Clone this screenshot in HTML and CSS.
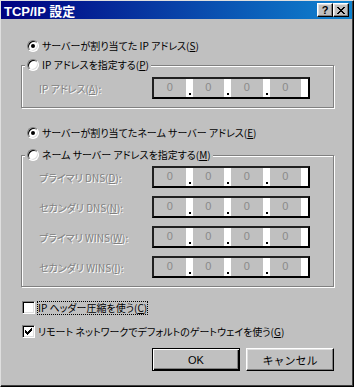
FILE: index.html
```html
<!DOCTYPE html>
<html lang="ja">
<head>
    <meta charset="UTF-8">
    <title>TCP/IP 設定</title>
    <link rel="stylesheet" href="styles.css">
</head>
<body>
    <div class="window">
        <div class="titlebar">
            <span class="title">TCP/IP 設定</span>
            <div class="title-buttons">
                <span class="tbtn help">?</span>
                <span class="tbtn close">
                    <svg width="8" height="7" viewBox="0 0 8 7" shape-rendering="crispEdges"><path d="M0 0h2v1H0z M6 0h2v1H6z M1 1h2v1H1z M5 1h2v1H5z M2 2h4v1H2z M3 3h2v1H3z M2 4h4v1H2z M1 5h2v1H1z M5 5h2v1H5z M0 6h2v1H0z M6 6h2v1H6z" fill="#000"/></svg>
                </span>
            </div>
        </div>

        <div class="content">
            <label class="option ip-auto">
                <span class="radio checked"></span>
                <span class="text">サーバーが割り当てた IP アドレス(<u>S</u>)</span>
            </label>

            <div class="group group-ip">
                <div class="legend option">
                    <span class="radio"></span>
                    <span class="text">IP アドレスを指定する(<u>P</u>)</span>
                </div>
                <div class="field-row">
                    <span class="field-label">IP アドレス(<u>A</u>):</span>
                    <div class="ipbox">
                        <span class="octet"><span class="num">0</span><span class="sep dot"></span></span>
                        <span class="octet"><span class="num">0</span><span class="sep dot"></span></span>
                        <span class="octet"><span class="num">0</span><span class="sep dot"></span></span>
                        <span class="octet"><span class="num">0</span><span class="sep"></span></span>
                    </div>
                </div>
            </div>

            <label class="option dns-auto">
                <span class="radio checked"></span>
                <span class="text">サーバーが割り当てたネーム サーバー アドレス(<u>E</u>)</span>
            </label>

            <div class="group group-dns">
                <div class="legend option">
                    <span class="radio"></span>
                    <span class="text">ネーム サーバー アドレスを指定する(<u>M</u>)</span>
                </div>
                <div class="field-row">
                    <span class="field-label">プライマリ DNS(<u>D</u>):</span>
                    <div class="ipbox">
                        <span class="octet"><span class="num">0</span><span class="sep dot"></span></span>
                        <span class="octet"><span class="num">0</span><span class="sep dot"></span></span>
                        <span class="octet"><span class="num">0</span><span class="sep dot"></span></span>
                        <span class="octet"><span class="num">0</span><span class="sep"></span></span>
                    </div>
                </div>
                <div class="field-row">
                    <span class="field-label">セカンダリ DNS(<u>N</u>):</span>
                    <div class="ipbox">
                        <span class="octet"><span class="num">0</span><span class="sep dot"></span></span>
                        <span class="octet"><span class="num">0</span><span class="sep dot"></span></span>
                        <span class="octet"><span class="num">0</span><span class="sep dot"></span></span>
                        <span class="octet"><span class="num">0</span><span class="sep"></span></span>
                    </div>
                </div>
                <div class="field-row">
                    <span class="field-label">プライマリ WINS(<u>W</u>):</span>
                    <div class="ipbox">
                        <span class="octet"><span class="num">0</span><span class="sep dot"></span></span>
                        <span class="octet"><span class="num">0</span><span class="sep dot"></span></span>
                        <span class="octet"><span class="num">0</span><span class="sep dot"></span></span>
                        <span class="octet"><span class="num">0</span><span class="sep"></span></span>
                    </div>
                </div>
                <div class="field-row">
                    <span class="field-label">セカンダリ WINS(<u>I</u>):</span>
                    <div class="ipbox">
                        <span class="octet"><span class="num">0</span><span class="sep dot"></span></span>
                        <span class="octet"><span class="num">0</span><span class="sep dot"></span></span>
                        <span class="octet"><span class="num">0</span><span class="sep dot"></span></span>
                        <span class="octet"><span class="num">0</span><span class="sep"></span></span>
                    </div>
                </div>
            </div>

            <label class="check header-comp">
                <span class="checkbox"></span>
                <span class="text focus">IP ヘッダー圧縮を使う(<u>C</u>)</span>
            </label>
            <label class="check gateway">
                <span class="checkbox">
                    <svg width="7" height="7" viewBox="0 0 7 7" shape-rendering="crispEdges"><path d="M6 0h1v1H6z M5 1h2v1H5z M0 2h1v1H0z M4 2h3v1H4z M0 3h2v1H0z M3 3h3v1H3z M0 4h5v1H0z M1 5h3v1H1z M2 6h1v1H2z" fill="#000"/></svg>
                </span>
                <span class="text">リモート ネットワークでデフォルトのゲートウェイを使う(<u>G</u>)</span>
            </label>

            <div class="buttons">
                <button class="btn default">OK</button>
                <button class="btn">キャンセル</button>
            </div>
        </div>
    </div>
</body>
</html>
```

FILE: styles.css
```css
body {
    margin: 0;
    background: #c0c0c0;
    font-family: "Noto Sans CJK JP", sans-serif;
    font-size: 10px;
    font-feature-settings: "palt";
    color: #000;
}
.window {
    width: 354px;
    height: 387px;
    box-sizing: border-box;
    border: 1px solid;
    border-color: #dfdfdf #000 #000 #dfdfdf;
    box-shadow: inset -1px -1px #404040;
    background: #c0c0c0;
    display: flex;
    flex-direction: column;
}
.titlebar {
    height: 18px;
    margin-right: 1px;
    padding: 0 3px 0 3px;
    background: linear-gradient(to right, #000080, #1084d0);
    display: flex;
    align-items: center;
    justify-content: space-between;
}
.title {
    color: #fff;
    font: bold 13px "Liberation Sans", "Noto Sans CJK JP", sans-serif;
}
.title-buttons {
    display: flex;
}
.tbtn {
    width: 16px;
    height: 14px;
    box-sizing: border-box;
    background: #c0c0c0;
    border: 1px solid;
    border-color: #fff #000 #000 #fff;
    box-shadow: inset -1px -1px #808080, inset 1px 1px #dfdfdf;
    display: flex;
    align-items: center;
    justify-content: center;
    font: bold 11px/12px "Liberation Sans", sans-serif;
}
.content {
    flex: 1;
    padding: 20px 19px 0 20px;
    display: flex;
    flex-direction: column;
}
.option {
    display: flex;
    align-items: center;
    gap: 3px;
    height: 14px;
    line-height: 14px;
    white-space: nowrap;
}
.ip-auto,
.dns-auto {
    margin-left: 6px;
}
.dns-auto {
    margin-top: 18px;
}
.radio {
    width: 12px;
    height: 12px;
    box-sizing: border-box;
    border-radius: 50%;
    border: 1px solid;
    border-color: #808080 #fff #fff #808080;
    box-shadow: inset 1px 1px #000, inset -1px -1px #dfdfdf;
    background: #fff;
    display: flex;
    align-items: center;
    justify-content: center;
}
.radio.checked::after {
    content: "";
    width: 4px;
    height: 4px;
    border-radius: 50%;
    background: #000;
}
u {
    text-decoration: underline;
    text-underline-offset: 1px;
}
.group {
    border: 1px solid #808080;
    box-shadow: inset 1px 1px #fff, 1px 1px #fff;
    display: flex;
    flex-direction: column;
    padding-bottom: 8px;
}
.group-ip {
    margin-top: 12px;
}
.group-dns {
    margin-top: 15px;
    gap: 8px;
}
.legend {
    align-self: flex-start;
    margin: -8px 0 0 3px;
    padding: 0 2px;
    background: #c0c0c0;
}
.field-row {
    display: flex;
    align-items: center;
    padding-left: 17px;
}
.group-ip .field-row {
    margin-top: 5px;
}
.group-dns .legend {
    margin-bottom: -4px;
}
.field-label {
    width: 113px;
    color: #808080;
    text-shadow: 1px 1px #fff;
    white-space: nowrap;
}
.ipbox {
    width: 158px;
    height: 22px;
    box-sizing: border-box;
    border: 2px solid;
    border-color: #202020 #000 #000 #202020;
    background: #fff;
    display: grid;
    grid-template-columns: repeat(4, 1fr);
}
.octet {
    display: flex;
}
.num {
    flex: 1;
    background: #c0c0c0;
    color: #8a8a8a;
    text-align: center;
    font: 11px/15px "Liberation Sans", sans-serif;
    padding-top: 1px;
}
.sep {
    width: 7px;
    background: #fff;
    display: flex;
    align-items: flex-end;
    padding: 0 0 2px 3px;
    box-sizing: border-box;
}
.dot::after {
    content: "";
    width: 2px;
    height: 2px;
    background: #000;
}
.check {
    display: flex;
    align-items: center;
    gap: 2px;
    height: 15px;
    margin-left: 1px;
    white-space: nowrap;
}
.header-comp {
    margin-top: 13px;
}
.gateway {
    margin-top: 9px;
}
.checkbox {
    width: 13px;
    height: 13px;
    box-sizing: border-box;
    border: 1px solid;
    border-color: #808080 #fff #fff #808080;
    box-shadow: inset 1px 1px #000, inset -1px -1px #dfdfdf;
    background: #fff;
    display: flex;
    align-items: center;
    justify-content: center;
}
.check .text {
    border: 1px dotted transparent;
    line-height: 12px;
}
.check .text.focus {
    border-color: #000;
}
.buttons {
    display: flex;
    justify-content: flex-end;
    gap: 6px;
    margin-top: 9px;
}
.btn {
    width: 88px;
    height: 23px;
    box-sizing: border-box;
    padding: 0;
    background: #c0c0c0;
    border: 1px solid;
    border-color: #fff #000 #000 #fff;
    box-shadow: inset -1px -1px #808080, inset 1px 1px #dfdfdf;
    font-family: "Liberation Sans", "Noto Sans CJK JP", sans-serif;
    font-size: 11px;
    color: #000;
}
.btn.default {
    border: 1px solid #000;
    box-shadow: inset 1px 1px #fff, inset -1px -1px #000, inset -2px -2px #808080;
}
```
